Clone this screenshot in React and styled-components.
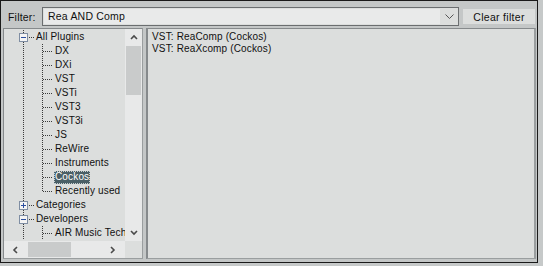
import React from "react";
import styled, { createGlobalStyle } from "styled-components";

const Global = createGlobalStyle`
  html, body { margin: 0; padding: 0; background: #c6c9c9; }
  body { font-family: "Liberation Sans", Arial, sans-serif; font-size: 10px; color: #101010; }
`;

const Frame = styled.div`
  box-sizing: border-box;
  width: 538px;
  height: 263px;
  border: 1px solid #1a1a1a;
  background: #c4c7c7;
  display: flex;
  flex-direction: column;
  padding: 6px 1px 3px 2px;
`;

const FilterBar = styled.div`
  display: flex;
  align-items: center;
  height: 19px;
  margin-bottom: 2px;
`;

const Label = styled.span`
  width: 34px;
  padding-left: 5px;
  font-size: 10.5px;
  letter-spacing: 0.2px;
`;

const FilterBox = styled.div`
  box-sizing: border-box;
  display: flex;
  width: 417px;
  height: 19px;
  border: 1px solid #6b6e70;
  background: #dcdedd;
`;

const FilterInput = styled.div`
  flex: 1;
  background: #e9eaea;
  margin: 1px 0 1px 1px;
  padding-left: 4px;
  line-height: 15px;
  font-size: 10.5px;
  letter-spacing: 0.2px;
`;

const Caret = styled.div`
  width: 18px;
  display: flex;
  align-items: center;
  justify-content: center;
`;

const ClearButton = styled.div`
  margin-left: 4px;
  width: 72px;
  height: 15px;
  background: #dcdedd;
  display: flex;
  align-items: center;
  justify-content: center;
  font-size: 10.5px;
  letter-spacing: 0.3px;
`;

const Main = styled.div`
  flex: 1;
  display: flex;
  gap: 3px;
  min-height: 0;
`;

const Panel = styled.div`
  box-sizing: border-box;
  border-top: 1px solid #868a8c;
  border-left: 1px solid #868a8c;
  border-right: 1px solid #9a9e9f;
  border-bottom: 1px solid #9a9e9f;
  background: #dcdedd;
`;

const TreePanel = styled(Panel)`
  width: 140px;
  display: grid;
  grid-template-columns: 1fr 17px;
  grid-template-rows: 1fr 17px;
  overflow: hidden;
`;

const ListPanel = styled(Panel)`
  flex: 1;
  border-left-width: 2px;
  border-right-width: 2px;
  padding: 2px 0 0 4px;
`;

const ListItem = styled.div`
  height: 12px;
  line-height: 12px;
  letter-spacing: 0.15px;
  white-space: nowrap;
`;

const TreeBody = styled.div`
  overflow: hidden;
  padding-top: 1px;
  background: #dcdedd;
`;

const Row = styled.div`
  display: flex;
  height: 14px;
  align-items: stretch;
  white-space: nowrap;
`;

const Lead = styled.div`
  width: ${(p) => p.$w}px;
  flex: none;
  background: ${(p) => (p.$line ? `linear-gradient(#3a3a3a 50%, transparent 50%) ${p.$line}px 0 / 1px 2px repeat-y` : "none")};
`;

const BoxCell = styled.div`
  width: 9px;
  flex: none;
  display: flex;
  align-items: center;
  background: linear-gradient(#3a3a3a 50%, transparent 50%) 4px 0 / 1px 2px repeat-y;
`;

const FirstBox = styled.div`
  width: 9px;
  flex: none;
  display: flex;
  align-items: center;
  background: linear-gradient(#3a3a3a 50%, transparent 50%) 4px 8px / 1px 2px repeat-y;
`;

const Expander = styled.div`
  box-sizing: border-box;
  width: 9px;
  height: 9px;
  border: 1px solid #7f8ea3;
  background: #f4f4f4;
  display: flex;
  align-items: center;
  justify-content: center;
`;

const Minus = styled.div`
  width: 5px;
  height: 1px;
  background: #2a4ea0;
`;

const Plus = styled.div`
  position: relative;
  width: 5px;
  height: 1px;
  background: #2a4ea0;
  &::after {
    content: "";
    position: absolute;
    left: 2px;
    top: -2px;
    width: 1px;
    height: 5px;
    background: #2a4ea0;
  }
`;

const HDots = styled.div`
  width: ${(p) => p.$w}px;
  flex: none;
  background: linear-gradient(90deg, #3a3a3a 50%, transparent 50%) 1px 7px / 2px 1px repeat-x;
`;

const Branch = styled.div`
  width: 15px;
  flex: none;
  display: flex;
`;

const BranchStem = styled.div`
  width: 5px;
  flex: none;
  height: ${(p) => (p.$last ? "8px" : "14px")};
  background: linear-gradient(#3a3a3a 50%, transparent 50%) 4px 0 / 1px 2px repeat-y;
`;

const BranchArm = styled.div`
  flex: 1;
  background: linear-gradient(90deg, #3a3a3a 50%, transparent 50%) 0 7px / 2px 1px repeat-x;
`;

const Text = styled.span`
  display: flex;
  align-items: center;
  padding: 0 1px;
  margin-left: 1px;
  letter-spacing: 0.15px;
  line-height: 12px;
  align-self: center;
  height: 13px;
  box-sizing: border-box;
  ${(p) =>
    p.$selected &&
    `
    background: #4a5f66;
    color: #ffffff;
    outline: 1px dotted #c8d0d0;
    outline-offset: -1px;
  `}
`;

const VScroll = styled.div`
  background: #e8e9e9;
  display: flex;
  flex-direction: column;
  align-items: stretch;
`;

const ArrowBtn = styled.div`
  height: 17px;
  flex: none;
  display: flex;
  align-items: center;
  justify-content: center;
`;

const VThumb = styled.div`
  height: 49px;
  margin: 0 1px;
  background: #c9cbcb;
`;

const Spacer = styled.div`
  flex: 1;
`;

const HScroll = styled.div`
  background: #e8e9e9;
  display: flex;
  align-items: stretch;
`;

const HArrow = styled.div`
  width: 24px;
  flex: none;
  display: flex;
  align-items: center;
  justify-content: center;
`;

const HThumb = styled.div`
  width: 43px;
  margin: 1px 0;
  background: #c9cbcb;
`;

const Corner = styled.div`
  background: #dcdedd;
`;

const Chevron = ({ dir }) => {
  const paths = {
    up: "M1 5 L4 2 L7 5",
    down: "M1 2 L4 5 L7 2",
    left: "M5 1 L2 4 L5 7",
    right: "M2 1 L5 4 L2 7",
  };
  return (
    <svg width="8" height="8" viewBox="0 0 8 8">
      <path d={paths[dir]} fill="none" stroke="#4a4a4a" strokeWidth="1.6" />
    </svg>
  );
};

const rootLine = 19;

const RootRow = ({ label, open, first }) => {
  const Box = first ? FirstBox : BoxCell;
  return (
    <Row>
      <Lead $w={15} />
      <Box>
        <Expander>{open ? <Minus /> : <Plus />}</Expander>
      </Box>
      <HDots $w={6} />
      <Text>{label}</Text>
    </Row>
  );
};

const ChildRow = ({ label, last, selected }) => (
  <Row>
    <Lead $w={34} $line={rootLine} />
    <Branch>
      <BranchStem $last={last} />
      <BranchArm />
    </Branch>
    <Text $selected={selected}>{label}</Text>
  </Row>
);

const plugins = ["DX", "DXi", "VST", "VSTi", "VST3", "VST3i", "JS", "ReWire", "Instruments", "Cockos", "Recently used"];

export default function App() {
  return (
    <>
      <Global />
      <Frame>
        <FilterBar>
          <Label>Filter:</Label>
          <FilterBox>
            <FilterInput>Rea AND Comp</FilterInput>
            <Caret>
              <svg width="9" height="6" viewBox="0 0 9 6">
                <path d="M0.5 0.5 L4.5 4.5 L8.5 0.5" fill="none" stroke="#555" strokeWidth="1" />
              </svg>
            </Caret>
          </FilterBox>
          <ClearButton>Clear filter</ClearButton>
        </FilterBar>
        <Main>
          <TreePanel>
            <TreeBody>
              <RootRow label="All Plugins" open first />
              {plugins.map((p, i) => (
                <ChildRow key={p} label={p} last={i === plugins.length - 1} selected={p === "Cockos"} />
              ))}
              <RootRow label="Categories" />
              <RootRow label="Developers" open />
              <ChildRow label="AIR Music Tech" />
            </TreeBody>
            <VScroll>
              <ArrowBtn>
                <Chevron dir="up" />
              </ArrowBtn>
              <VThumb />
              <Spacer />
              <ArrowBtn>
                <Chevron dir="down" />
              </ArrowBtn>
            </VScroll>
            <HScroll>
              <HArrow>
                <Chevron dir="left" />
              </HArrow>
              <HThumb />
              <Spacer />
              <HArrow>
                <Chevron dir="right" />
              </HArrow>
            </HScroll>
            <Corner />
          </TreePanel>
          <ListPanel>
            <ListItem>VST: ReaComp (Cockos)</ListItem>
            <ListItem>VST: ReaXcomp (Cockos)</ListItem>
          </ListPanel>
        </Main>
      </Frame>
    </>
  );
}
